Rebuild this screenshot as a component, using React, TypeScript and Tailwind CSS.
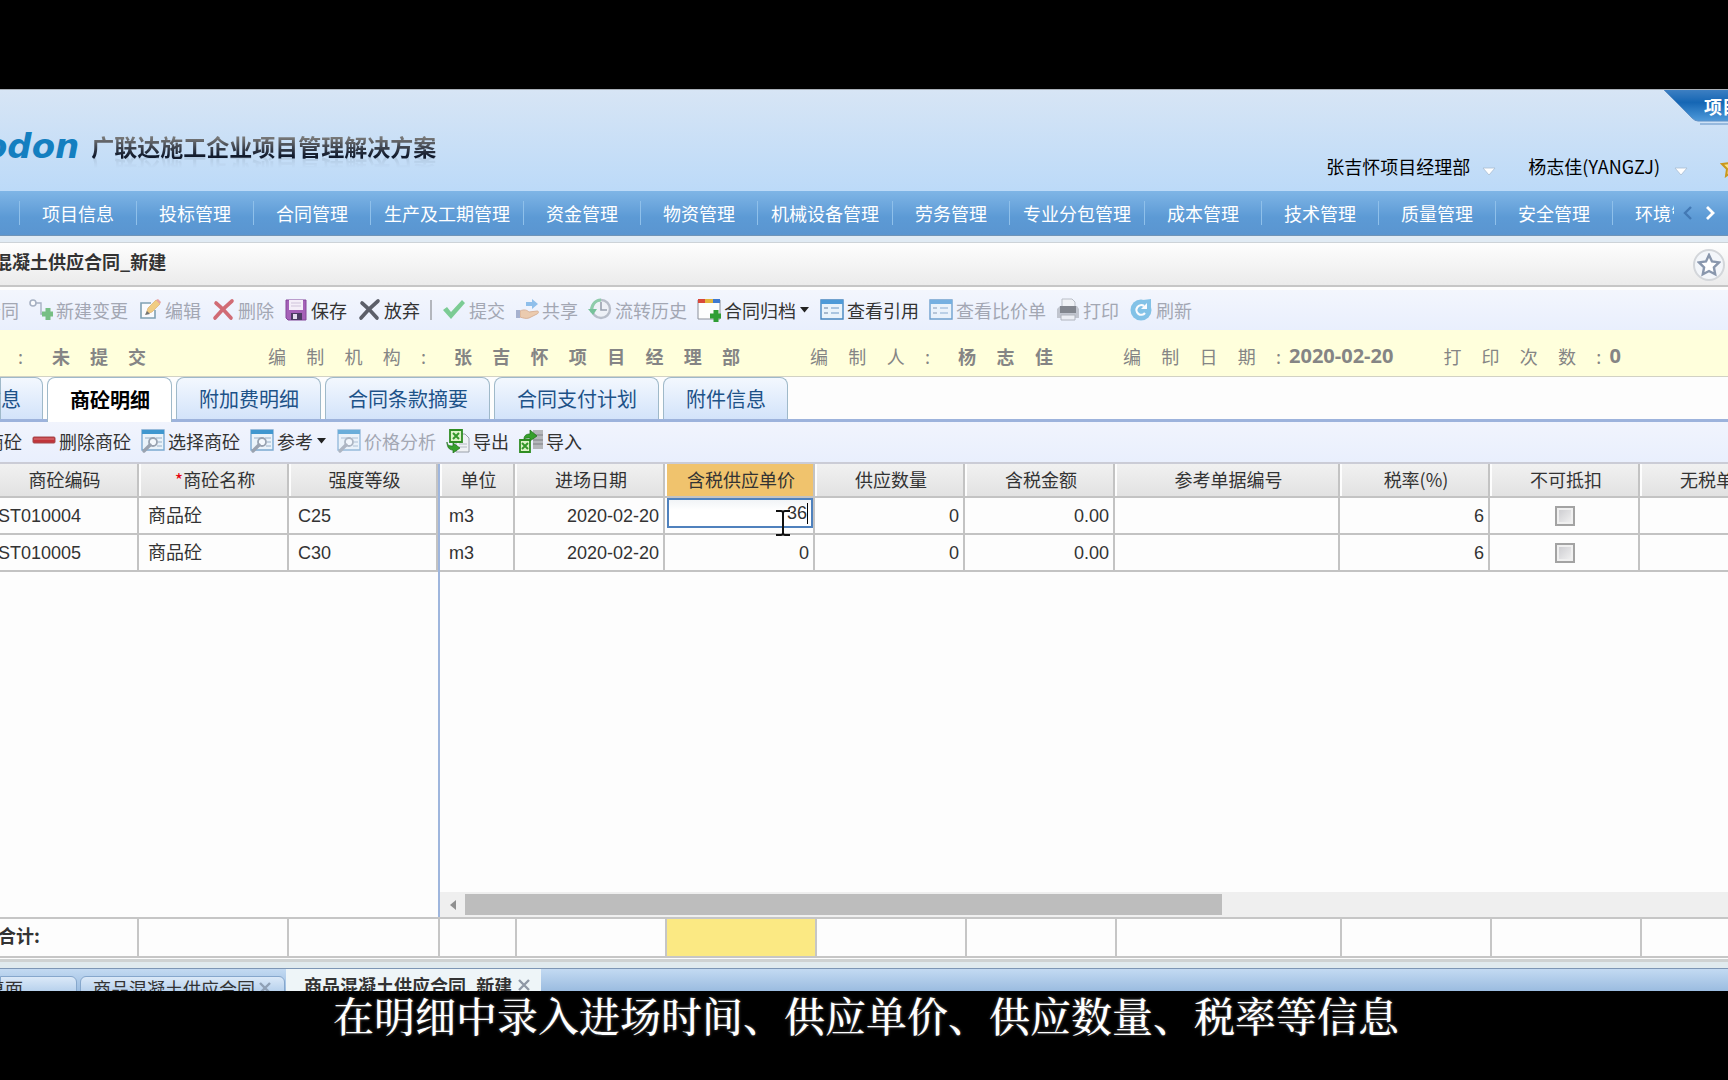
import type { ReactNode } from "react";

const NAV_ITEMS = [
  "项目信息",
  "投标管理",
  "合同管理",
  "生产及工期管理",
  "资金管理",
  "物资管理",
  "机械设备管理",
  "劳务管理",
  "专业分包管理",
  "成本管理",
  "技术管理",
  "质量管理",
  "安全管理",
];

const TABS = ["附加费明细", "合同条款摘要", "合同支付计划", "附件信息"];

const ROWS = [
  { code: "ST010004", name: "商品砼", grade: "C25", unit: "m3", date: "2020-02-20", price: "36", qty: "0", amount: "0.00", rate: "6" },
  { code: "ST010005", name: "商品砼", grade: "C30", unit: "m3", date: "2020-02-20", price: "0", qty: "0", amount: "0.00", rate: "6" },
];

/* ---------- icons ---------- */

function Icon({ children }: { children: ReactNode }) {
  return (
    <svg viewBox="0 0 24 24" className="h-6 w-6 shrink-0" aria-hidden="true">
      {children}
    </svg>
  );
}

const ChangeIcon = () => (
  <Icon>
    <circle cx="4" cy="5" r="3" fill="#fff" stroke="#8f9bb0" strokeWidth="1.6" />
    <path d="M7 5h5v11h3" fill="none" stroke="#8f9bb0" strokeWidth="1.4" />
    <path d="M19 10v12M13 16h12" stroke="#4fae5c" strokeWidth="5" />
  </Icon>
);

const EditIcon = () => (
  <Icon>
    <path d="M13 5H3v15h14v-8" fill="#fff" stroke="#5c869c" strokeWidth="1.6" />
    <path d="M8 16l2-6 8-8 4 4-8 8z" fill="#f2c05a" stroke="#d9a24e" strokeWidth="0.8" />
    <path d="M18 2l4 4 1-2-3-3z" fill="#e58a83" />
    <path d="M7 17l2-4 3 3z" fill="#4a4a4a" />
  </Icon>
);

const CrossIcon = ({ color }: { color: string }) => (
  <Icon>
    <path d="M5 5c5 4 10 9 15 15M21 3C15 8 9 14 4 20" fill="none" stroke={color} strokeWidth="3.6" strokeLinecap="round" />
  </Icon>
);

const SaveIcon = () => (
  <Icon>
    <path d="M2 2h20v20H4l-2-2z" fill="#a561b8" stroke="#84469a" />
    <path d="M5 2h14v10H5z" fill="#f4eef8" />
    <path d="M7 5h10M7 8h10" stroke="#cfc3da" />
    <path d="M7 15h11v7H7z" fill="#4b3a63" />
    <path d="M9 16h4v5H9z" fill="#e5dcee" />
  </Icon>
);

const CheckIcon = () => (
  <Icon>
    <path d="M1 12l4-3 4 5L20 2l3 3-14 16z" fill="#56bf72" />
  </Icon>
);

const ShareIcon = () => (
  <Icon>
    <path d="M11 4h6V1l6 5-6 5V8h-6z" fill="#6faee6" />
    <path d="M5 13c4-2 7-1 9 1l8-1c2 0 2 2 0 3l-8 4c-3 1-6 0-9-1z" fill="#ebbf96" stroke="#c98f66" strokeWidth="0.8" />
    <path d="M1 12h4v8H1z" fill="#8f9cc0" />
  </Icon>
);

const HistoryIcon = () => (
  <Icon>
    <circle cx="13" cy="11" r="9" fill="#eef1f5" stroke="#a6adb9" strokeWidth="2.4" />
    <path d="M13 4v8h6" fill="none" stroke="#7d8695" strokeWidth="1.6" />
    <path d="M4 14a9.500 9.500 0 0 1 9-12" fill="none" stroke="#6fc08f" strokeWidth="3" />
    <path d="M0 11h9l-4 6z" fill="#4fb279" />
  </Icon>
);

const ArchiveIcon = () => (
  <Icon>
    <path d="M1 2h22v19H1z" fill="#fdfdfd" stroke="#8a8f99" />
    <path d="M1 1h7v4H1z" fill="#d9483b" />
    <path d="M8 1h8v4H8z" fill="#e3b53c" />
    <path d="M16 1h7v4h-7z" fill="#3f79cf" />
    <path d="M19 12v12M13 18h11" stroke="#2f9e35" strokeWidth="5" />
  </Icon>
);

const FormIcon = () => (
  <Icon>
    <path d="M1 2h22v19H1z" fill="#e9f3fb" stroke="#4585bf" strokeWidth="1.4" />
    <path d="M1 2h22v4H1z" fill="#4d9ad8" />
    <path d="M4 10h4M4 15h4" stroke="#8fa5bd" strokeWidth="1.6" />
    <path d="M11 10h8M11 15h8" stroke="#a9c5e0" strokeWidth="2" />
  </Icon>
);

const PrintIcon = () => (
  <Icon>
    <path d="M6 1h10l3 3v7H6z" fill="#f1f2f4" stroke="#a9adb5" />
    <path d="M1 11l3-3h17l2 3v9H1z" fill="#b3b7c0" />
    <path d="M4 8h16v7H4z" fill="#5f626a" />
    <path d="M5 17h14v5H5z" fill="#eceef1" stroke="#9ca0a8" />
  </Icon>
);

const RefreshIcon = () => (
  <Icon>
    <circle cx="12" cy="12" r="10.500" fill="#5fb2e0" />
    <path d="M14 2l8-1v10h-4z" fill="#5fb2e0" />
    <path d="M16 15a4.800 4.800 0 1 1-1-7" fill="none" stroke="#fff" strokeWidth="2.2" />
    <path d="M18 5v6h-6z" fill="#fff" />
  </Icon>
);

const MinusIcon = () => (
  <Icon>
    <rect x="1" y="8" width="22" height="6" rx="1" fill="#c0343a" stroke="#a5484c" />
    <path d="M2 10h20" stroke="#dc7d80" />
  </Icon>
);

const PickIcon = () => (
  <Icon>
    <path d="M1 1h22v20H1z" fill="#eaf3fa" stroke="#7ba9d0" strokeWidth="1.4" />
    <path d="M1 1h22v4H1z" fill="#3f97cf" />
    <path d="M4 9h6M15 9h6M17 13h4M16 17h5" stroke="#b4c6d7" strokeWidth="1.4" />
    <circle cx="12" cy="13" r="4" fill="#f4f9fd" stroke="#98a3b1" strokeWidth="1.8" />
    <path d="M9 16l-6 6" stroke="#9aa3b0" strokeWidth="3.4" strokeLinecap="round" />
  </Icon>
);

const ExportIcon = () => (
  <Icon>
    <path d="M12 5h7l4 4v14H10V5z" fill="#eff1f4" stroke="#9aa0aa" />
    <path d="M13 15h8M13 18h8" stroke="#b5bac3" />
    <path d="M4 1h12v12H4z" fill="#dff3c8" stroke="#2f8d22" strokeWidth="1.8" />
    <path d="M7 4l6 6M13 4l-6 6" stroke="#35972a" strokeWidth="2" />
    <path d="M1 13c0 3 2 4 6 4v-3l7 5-7 5v-3c-4 0-6-3-6-8z" fill="#36a02c" stroke="#1c6d17" strokeWidth="0.7" />
  </Icon>
);

const ImportIcon = () => (
  <Icon>
    <path d="M14 1h10v19H14z" fill="#b4b6ba" />
    <path d="M14 6h10M14 11h10M14 15h10" stroke="#909398" strokeWidth="1.4" />
    <path d="M1 11h10v12H1z" fill="#dff3c8" stroke="#2f8d22" strokeWidth="1.8" />
    <path d="M3 14l6 6M9 14l-6 6" stroke="#35972a" strokeWidth="2" />
    <path d="M5 10c0-4 3-5 6-5V1l7 6-7 5V9c-3 0-4 0-6 1z" fill="#36a02c" stroke="#1c6d17" strokeWidth="0.7" />
  </Icon>
);

/* ---------- small parts ---------- */

function Tool({ icon, label, disabled, menu }: { icon?: ReactNode; label: string; disabled?: boolean; menu?: boolean }) {
  return (
    <button
      disabled={disabled}
      className="flex shrink-0 items-center gap-[3px] text-[18px] leading-6 text-[#333] disabled:text-[#a3a7b3]"
    >
      {disabled && icon ? <span className="opacity-75">{icon}</span> : icon}
      {label}
      {menu && (
        <svg viewBox="0 0 11 6" className="h-[6px] w-[11px]" aria-hidden="true">
          <path d="M1 0h9L5.500 5.500z" fill="#222" />
        </svg>
      )}
    </button>
  );
}

function DownMark() {
  return (
    <svg viewBox="0 0 14 10" className="mt-3 h-[10px] w-[14px]" aria-hidden="true">
      <path d="M1 1h12L7 8z" fill="#fff" stroke="#a8bdd2" strokeWidth="0.8" />
    </svg>
  );
}

function Th({ children }: { children?: ReactNode }) {
  return (
    <th className="overflow-hidden border-r-2 border-b-2 border-[#c3c3c3] bg-linear-to-b from-[#f1f1f1] to-[#e2e2e2] pb-0.5 pl-1 text-center font-normal whitespace-nowrap shadow-[inset_2px_0_0_#fdfdfd]">
      {children}
    </th>
  );
}

function Td({ children, right }: { children?: ReactNode; right?: boolean }) {
  return (
    <td className={`border-r-2 border-b-2 border-[#c3c3c3] ${right ? "pr-1 text-right" : "pl-[9px]"}`}>
      {children}
    </td>
  );
}

export default function App() {
  return (
    <div className="min-h-screen w-full overflow-hidden bg-black pt-[89px] font-['Noto_Sans_CJK_SC',sans-serif] text-[18px] leading-6 text-[#333]">
      <div className="flex h-[902px] flex-col overflow-hidden bg-[#fdfdfd]">
        {/* Banner */}
        <header className="relative flex h-[102px] shrink-0 items-start justify-between border-t border-[#a9b0b8] bg-linear-to-b from-[#d7e5f5] to-[#bcdaf8]">
          <div className="-ml-4 flex items-center gap-3 pt-9">
            <span className="font-['DejaVu_Sans',sans-serif] text-[34px] leading-10 font-bold text-[#147fc0] italic">
              odon
            </span>
            <h1 className="bg-linear-to-b from-[#777] from-30% to-[#111a2c] to-75% bg-clip-text text-[23px] leading-10 font-bold text-transparent [-webkit-box-reflect:below_-18px_linear-gradient(transparent_50%,#0003)]">
              广联达施工企业项目管理解决方案
            </h1>
          </div>
          <div className="flex items-center pt-16 text-black">
            <button className="flex items-center gap-3">
              张吉怀项目经理部
              <DownMark />
            </button>
            <button className="ml-8 flex items-center gap-3.5">
              杨志佳(YANGZJ)
              <DownMark />
            </button>
            <svg viewBox="0 0 24 24" className="-mr-4 ml-8 h-6 w-6" aria-hidden="true">
              <path d="M12 2l3 7 7 1-5 5 1 7-6-4-6 4 1-7-5-5 7-1z" fill="#fbe58a" stroke="#c9971d" strokeWidth="2" />
            </svg>
          </div>
          {/* Corner ribbon */}
          <div className="absolute top-0 right-0 h-9 w-[64px]">
            <svg viewBox="0 0 64 36" className="absolute inset-0 h-9 w-[64px]" aria-hidden="true">
              <defs>
                <linearGradient id="ribbon" x1="0" y1="0" x2="0" y2="1">
                  <stop offset="0" stopColor="#3d7fc2" />
                  <stop offset="0.4" stopColor="#1566b4" />
                  <stop offset="1" stopColor="#4f9ada" />
                </linearGradient>
              </defs>
              <path d="M0 0h64v31H34q-3 0-6-3z" fill="url(#ribbon)" />
              <path d="M0 0l28 28q3 3 6 3h30M36 34h28" fill="none" stroke="#5f8fc4" />
            </svg>
            <span className="absolute top-1 left-10 w-6 overflow-hidden font-bold whitespace-nowrap text-white">
              项目
            </span>
          </div>
        </header>

        {/* Main navigation */}
        <nav className="flex h-[45px] shrink-0 items-center border-b border-[#6f94b8] bg-linear-to-b from-[#7fb5e6] via-[#5c9ad5] via-60% to-[#5a95d0] pl-[19px] text-white">
          {NAV_ITEMS.map((item) => (
            <a
              key={item}
              href="#"
              className="min-w-[117px] shrink-0 border-l border-[#8fc0ea] px-[13px] text-center whitespace-nowrap"
            >
              {item}
            </a>
          ))}
          <a href="#" className="w-[62px] shrink-0 overflow-hidden border-l border-[#8fc0ea] pl-[22px] whitespace-nowrap">
            环境管理
          </a>
          <button className="ml-1.5 flex w-4 justify-center" aria-label="向左">
            <svg viewBox="0 0 10 14" className="h-[14px] w-[10px]">
              <path d="M8 1L2 7l6 6" fill="none" stroke="#4379b4" strokeWidth="2.4" />
            </svg>
          </button>
          <button className="ml-1.5 flex w-4 justify-center" aria-label="向右">
            <svg viewBox="0 0 10 14" className="h-[14px] w-[10px]">
              <path d="M2 1l6 6-6 6" fill="none" stroke="#fff" strokeWidth="2.8" />
            </svg>
          </button>
        </nav>
        <div className="h-[7px] shrink-0 border-b border-[#cdd3d8] bg-[#e1ebf4]" />

        {/* Page title */}
        <div className="flex h-[44px] shrink-0 items-center justify-between border-b-2 border-[#c6c6c6] bg-linear-to-b from-[#fefefe] to-[#ebebeb] pt-0.5 pr-[3px]">
          <h2 className="-ml-[6px] pb-2 font-bold">混凝土供应合同_新建</h2>
          <button
            className="flex h-8 w-8 items-center justify-center rounded-full border-2 border-[#d3d6da] bg-[#f3f6fa]"
            aria-label="收藏"
          >
            <svg viewBox="0 0 24 24" className="h-6 w-6">
              <path
                d="M12 2l3 6.500 7 .9-5.100 4.900 1.300 7L12 18l-6.200 3.300 1.300-7L2 9.400l7-.9z"
                fill="#fff"
                stroke="#8997ad"
                strokeWidth="2.400"
              />
            </svg>
          </button>
        </div>

        {/* Form toolbar */}
        <div className="mt-[3px] flex h-[40px] shrink-0 items-center gap-2.5 bg-linear-to-b from-[#f3f6fd] to-[#e9effd]">
          <div className="-ml-[17px]">
            <Tool label="合同" disabled />
          </div>
          <Tool icon={<ChangeIcon />} label="新建变更" disabled />
          <Tool icon={<EditIcon />} label="编辑" disabled />
          <Tool icon={<CrossIcon color="#c73f48" />} label="删除" disabled />
          <Tool icon={<SaveIcon />} label="保存" />
          <Tool icon={<CrossIcon color="#5c5f69" />} label="放弃" />
          <span className="h-5 w-0.5 bg-[#b3b6bd]" />
          <Tool icon={<CheckIcon />} label="提交" disabled />
          <Tool icon={<ShareIcon />} label="共享" disabled />
          <Tool icon={<HistoryIcon />} label="流转历史" disabled />
          <Tool icon={<ArchiveIcon />} label="合同归档" menu />
          <Tool icon={<FormIcon />} label="查看引用" />
          <Tool icon={<FormIcon />} label="查看比价单" disabled />
          <Tool icon={<PrintIcon />} label="打印" disabled />
          <Tool icon={<RefreshIcon />} label="刷新" disabled />
        </div>

        {/* Document status */}
        <div className="flex h-[47px] shrink-0 items-center border-b border-[#d2d2c4] bg-[#ffffdc] pt-1.5 pl-[18px] whitespace-nowrap text-[#858585]">
          <span>:</span>
          <b className="ml-[29px] w-[94px] shrink-0 [text-align-last:justify]">未提交</b>
          <span className="ml-[122px] w-[158px] shrink-0 [text-align-last:justify]">编制机构:</span>
          <b className="ml-7 w-[286px] shrink-0 [text-align-last:justify]">张吉怀项目经理部</b>
          <span className="ml-[70px] w-[120px] shrink-0 [text-align-last:justify]">编制人:</span>
          <b className="ml-7 w-[95px] shrink-0 [text-align-last:justify]">杨志佳</b>
          <span className="ml-[70px] w-[158px] shrink-0 [text-align-last:justify]">编制日期:</span>
          <b className="ml-2 font-['Open_Sans',sans-serif] text-[20px]">2020-02-20</b>
          <span className="ml-[50px] w-[158px] shrink-0 [text-align-last:justify]">打印次数:</span>
          <b className="ml-2 font-['Open_Sans',sans-serif] text-[20px]">0</b>
        </div>

        {/* Tabs */}
        <div role="tablist" className="flex h-[45px] shrink-0 items-start gap-1 border-b-[3px] border-[#9db3dc] text-[20px] text-[#1d5288]">
          <button
            role="tab"
            aria-selected="false"
            className="flex h-[42px] w-[43px] shrink-0 items-center justify-end rounded-tr-lg border border-b-0 border-[#9fb9c9] bg-linear-to-b from-[#f3f8fe] to-[#d3e3fa] pr-[21px] whitespace-nowrap"
          >
            信息
          </button>
          <button
            role="tab"
            aria-selected="true"
            className="h-[45px] shrink-0 rounded-t-lg border border-b-0 border-[#9fb9c9] bg-white pr-[21px] pl-[22px] font-bold text-black"
          >
            商砼明细
          </button>
          {TABS.map((tab) => (
            <button
              key={tab}
              role="tab"
              aria-selected="false"
              className="h-[42px] shrink-0 rounded-t-lg border border-b-0 border-[#9fb9c9] bg-linear-to-b from-[#f3f8fe] to-[#d3e3fa] pr-[21px] pl-[22px]"
            >
              {tab}
            </button>
          ))}
        </div>

        {/* Grid toolbar */}
        <div className="flex h-[42px] shrink-0 items-center gap-2.5 border-b-2 border-[#cbccd6] bg-linear-to-b from-[#f1f4fd] to-[#e9effd] pb-0.5">
          <div className="-ml-[14px]">
            <Tool label="商砼" />
          </div>
          <Tool icon={<MinusIcon />} label="删除商砼" />
          <Tool icon={<PickIcon />} label="选择商砼" />
          <Tool icon={<PickIcon />} label="参考" menu />
          <Tool icon={<PickIcon />} label="价格分析" disabled />
          <Tool icon={<ExportIcon />} label="导出" />
          <Tool icon={<ImportIcon />} label="导入" />
        </div>

        {/* Detail grid */}
        <div className="flex min-h-0 flex-1">
          <div className="w-[440px] shrink-0 border-r-2 border-[#9fb6dd]">
            <table className="w-full table-fixed border-separate border-spacing-0">
              <colgroup>
                <col className="w-[139px]" />
                <col className="w-[150px]" />
                <col />
              </colgroup>
              <thead>
                <tr className="h-[34px]">
                  <th className="border-r-2 border-b-2 border-[#c3c3c3] bg-linear-to-b from-[#f1f1f1] to-[#e2e2e2] pr-2 pb-0.5 text-center font-normal">
                    商砼编码
                  </th>
                  <Th>
                    <span className="text-red-600">*</span>商砼名称
                  </Th>
                  <Th>强度等级</Th>
                </tr>
              </thead>
              <tbody className="font-['Liberation_Sans','Noto_Sans_CJK_SC',sans-serif]">
                {ROWS.map((row) => (
                  <tr key={row.code} className="h-[37px]">
                    <td className="border-r-2 border-b-2 border-[#c3c3c3]">
                      <span className="-ml-[2px]">{row.code}</span>
                    </td>
                    <Td>{row.name}</Td>
                    <Td>{row.grade}</Td>
                  </tr>
                ))}
              </tbody>
            </table>
          </div>

          <div className="flex min-w-0 flex-1 flex-col overflow-hidden">
            <table className="w-[1350px] table-fixed border-separate border-spacing-0">
              <colgroup>
                <col className="w-[75px]" />
                <col className="w-[150px]" />
                <col className="w-[150px]" />
                <col className="w-[150px]" />
                <col className="w-[150px]" />
                <col className="w-[225px]" />
                <col className="w-[150px]" />
                <col className="w-[150px]" />
                <col className="w-[150px]" />
              </colgroup>
              <thead>
                <tr className="h-[34px]">
                  <Th>单位</Th>
                  <Th>进场日期</Th>
                  <th className="border-r-2 border-b-2 border-[#c3c3c3] bg-[#f0c36d] pb-0.5 pl-1 text-center font-normal shadow-[inset_2px_0_0_#fdfdfd]">
                    含税供应单价
                  </th>
                  <Th>供应数量</Th>
                  <Th>含税金额</Th>
                  <Th>参考单据编号</Th>
                  <Th>税率(%)</Th>
                  <Th>不可抵扣</Th>
                  <Th>无税单价</Th>
                </tr>
              </thead>
              <tbody className="font-['Liberation_Sans','Noto_Sans_CJK_SC',sans-serif]">
                {ROWS.map((row, i) => (
                  <tr key={row.code} className="h-[37px]">
                    <Td>{row.unit}</Td>
                    <Td right>{row.date}</Td>
                    {i === 0 ? (
                      <td className="relative border-r-2 border-b-2 border-[#c3c3c3] p-0 pl-0.5 align-top">
                        <input
                          aria-label="含税供应单价"
                          defaultValue={row.price}
                          className="block h-[30px] w-full border-2 border-[#4f81bd] bg-linear-to-b from-[#f1f4f7] to-white to-40% pr-1 text-right outline-none"
                        />
                        {/* text caret */}
                        <span className="absolute top-[5px] right-[5px] h-[21px] w-px bg-black" />
                        {/* mouse pointer */}
                        <svg viewBox="0 0 14 28" className="absolute top-[11px] right-[23px] h-7 w-[14px]" aria-hidden="true">
                          <path d="M0 2h5q2 0 2 2 0-2 2-2h5M7 3v22M0 26h5q2 0 2-2 0 2 2 2h5" fill="none" stroke="#111" strokeWidth="2" />
                        </svg>
                      </td>
                    ) : (
                      <Td right>{row.price}</Td>
                    )}
                    <Td right>{row.qty}</Td>
                    <Td right>{row.amount}</Td>
                    <Td />
                    <Td right>{row.rate}</Td>
                    <td className="border-r-2 border-b-2 border-[#c3c3c3] pl-0.5">
                      <input
                        type="checkbox"
                        aria-label="不可抵扣"
                        className="mx-auto block h-5 w-5 appearance-none border-2 border-[#a3a3a3] bg-linear-to-br from-[#c9c9cd] to-[#f5f5f5] shadow-[inset_0_0_0_2px_#f0f0f0]"
                      />
                    </td>
                    <Td />
                  </tr>
                ))}
              </tbody>
            </table>
            {/* Horizontal scroll bar */}
            <div className="mt-auto flex h-[25px] shrink-0 items-center bg-[#efefef]">
              <div className="flex w-[25px] justify-center">
                <svg viewBox="0 0 6 10" className="h-[10px] w-[6px]" aria-hidden="true">
                  <path d="M6 0v10L0 5z" fill="#8f8f8f" />
                </svg>
              </div>
              <div className="h-[21px] w-[757px] bg-[#bdbdbd]" />
            </div>
          </div>
        </div>

        {/* Totals */}
        <div className="flex h-[41px] shrink-0 border-y-2 border-[#c6c6c6]">
          <div className="w-[139px] shrink-0 border-r-2 border-[#c6c6c6] pt-1 font-bold">
            <span className="-ml-0.5">合计:</span>
          </div>
          <div className="w-[150px] shrink-0 border-r-2 border-[#c6c6c6]" />
          <div className="w-[151px] shrink-0 border-r-2 border-[#c6c6c6]" />
          <div className="w-[77px] shrink-0 border-r-2 border-[#c6c6c6]" />
          <div className="w-[150px] shrink-0 border-r-2 border-[#c6c6c6]" />
          <div className="w-[150px] shrink-0 border-r-2 border-[#c6c6c6] bg-[#fbe983]" />
          <div className="w-[150px] shrink-0 border-r-2 border-[#c6c6c6]" />
          <div className="w-[150px] shrink-0 border-r-2 border-[#c6c6c6]" />
          <div className="w-[225px] shrink-0 border-r-2 border-[#c6c6c6]" />
          <div className="w-[150px] shrink-0 border-r-2 border-[#c6c6c6]" />
          <div className="w-[150px] shrink-0 border-r-2 border-[#c6c6c6]" />
        </div>
        <div className="mt-px h-[9px] shrink-0 border-t-[3px] border-[#cfd2d2] bg-[#e0eaee]" />

        {/* Open pages */}
        <div className="flex h-[23px] shrink-0 overflow-hidden border-t border-[#7d96b5] bg-linear-to-b from-[#c3daf2] to-[#9bbce0] whitespace-nowrap">
          <a href="#" className="mt-[7px] flex h-6 w-[77px] shrink-0 items-center rounded-tr-md border border-[#86a7cc] bg-linear-to-b from-[#dbe9f8] to-[#a4c4e6]">
            <span className="-ml-[14px]">桌面</span>
          </a>
          <a href="#" className="mt-[7px] ml-[3px] flex h-6 w-[205px] shrink-0 items-center gap-1 rounded-t-md border border-[#86a7cc] bg-linear-to-b from-[#dbe9f8] to-[#a4c4e6] pl-3">
            商品混凝土供应合同
            <svg viewBox="0 0 12 12" className="h-3 w-3" aria-hidden="true">
              <path d="M1 1l10 10M11 1L1 11" stroke="#8fa0b5" strokeWidth="2.4" />
            </svg>
          </a>
          <a href="#" className="ml-px flex h-8 w-[255px] shrink-0 items-center gap-[6px] bg-[#eef5f8] pl-[18px] font-bold">
            商品混凝土供应合同_新建
            <svg viewBox="0 0 12 12" className="h-3 w-3" aria-hidden="true">
              <path d="M1 1l10 10M11 1L1 11" stroke="#8f98a5" strokeWidth="2.4" />
            </svg>
          </a>
        </div>
      </div>

      {/* Caption */}
      <p className="pl-1 text-center font-['Noto_Serif_CJK_SC','Noto_Sans_CJK_SC',serif] text-[41px] leading-12 font-medium whitespace-nowrap text-white [text-shadow:0_0_3px_#fff6]">
        在明细中录入进场时间、供应单价、供应数量、税率等信息
      </p>
    </div>
  );
}
